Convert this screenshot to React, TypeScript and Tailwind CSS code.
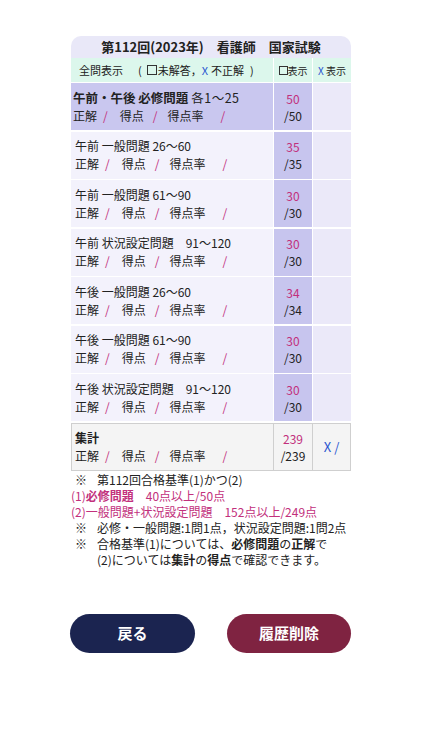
import React from "react";

const rows = [
  { title: "午前・午後 必修問題 各1〜25", bold: true, total: "50", hi: true },
  { title: "午前 一般問題 26〜60", total: "35" },
  { title: "午前 一般問題 61〜90", total: "30" },
  { title: "午前 状況設定問題　91〜120", total: "30" },
  { title: "午後 一般問題 26〜60", total: "34" },
  { title: "午後 一般問題 61〜90", total: "30" },
  { title: "午後 状況設定問題　91〜120", total: "30" },
];

function Box({ size }: { size: string }) {
  return <span className={`inline-block border border-[#333] ${size} align-[-1px]`} />;
}

function Line2() {
  return (
    <div className="leading-[18px] flex items-center">
      <span>正解</span>
      <span className="ml-[6px] text-[#c2307c]">/</span>
      <span className="ml-[12px]">得点</span>
      <span className="ml-[9px] text-[#c2307c]">/</span>
      <span className="ml-[10px]">得点率</span>
      <span className="ml-[17px] text-[#c2307c]">/</span>
    </div>
  );
}

export default function App() {
  return (
    <div className="w-[422px] h-[750px] bg-white text-[#222] font-['Noto_Sans_CJK_JP',sans-serif]">
      <div className="pt-[36px] pl-[71px] w-[351px]">
        <div className="h-[22px] rounded-t-[10px] bg-[#e9e8f8] flex items-center justify-center text-[13px] font-bold">
          第112回(2023年)　看護師　国家試験
        </div>
        <div className="h-[24px] flex bg-[#dcf7ec] text-[11px]">
          <div className="w-[202px] flex items-center pl-[8px]">
            <span>全問表示</span>
            <span className="ml-[15px]">(</span>
            <span className="ml-[5px] flex items-center">
              <Box size="w-[10px] h-[10px]" />
            </span>
            <span className="ml-[1px]">未解答，</span>
            <span className="text-[#2a56d0]">X</span>
            <span className="ml-[3px]">不正解</span>
            <span className="ml-[6px]">)</span>
          </div>
          <div className="w-[39px] border-l border-white flex items-center justify-center text-[10px]">
            <Box size="w-[9px] h-[9px]" />
            <span>表示</span>
          </div>
          <div className="w-[39px] border-l border-white flex items-center justify-center text-[10px]">
            <span className="text-[#2a56d0]">X</span>&nbsp;表示
          </div>
        </div>
        <div className="flex flex-col gap-[1.5px] pt-[1px]">
          {rows.map((r, i) => (
            <div key={i} className="h-[47px] flex text-[12px]">
              <div
                className={`w-[202px] flex flex-col justify-center ${
                  r.hi ? "bg-[#c9c7ef] pl-[2px]" : "bg-[#f3f2fc] pl-[4px]"
                }`}
              >
                <div className={`leading-[18px] ${r.bold ? "font-bold text-[12.5px]" : ""}`}>
                  {r.bold ? (
                    <>
                      午前・午後 必修問題 <span className="font-normal tracking-[0.5px]">各1〜25</span>
                    </>
                  ) : (
                    r.title
                  )}
                </div>
                <Line2 />
              </div>
              <div className="w-[39px] border-l border-white bg-[#c7c5ee] flex flex-col items-center justify-center text-[12px] leading-[17px]">
                <div className="text-[#c2307c]">{r.total}</div>
                <div>/{r.total}</div>
              </div>
              <div className="w-[39px] border-l border-white bg-[#ebe9f9]" />
            </div>
          ))}
          <div className="h-[48px] flex text-[12px] border border-[#cfcfcf] bg-[#f4f4f4]">
            <div className="w-[201px] flex flex-col justify-center pl-[3px]">
              <div className="leading-[18px] font-bold">集計</div>
              <Line2 />
            </div>
            <div className="w-[39px] border-l border-[#cfcfcf] flex flex-col items-center justify-center text-[12px] leading-[17px]">
              <div className="text-[#c2307c]">239</div>
              <div>/239</div>
            </div>
            <div className="w-[38px] border-l border-[#cfcfcf] flex items-center justify-center text-[13px] text-[#2a56d0]">
              X /
            </div>
          </div>
        </div>
        <div className="pt-[1px] text-[12px] leading-[16px]">
          <div className="pl-[4px] flex">
            <span className="w-[22px]">※</span>第112回合格基準(1)かつ(2)
          </div>
          <div className="text-[#c2307c]">
            (1)<span className="font-bold">必修問題</span>　40点以上/50点
          </div>
          <div className="text-[#c2307c]">(2)一般問題+状況設定問題　152点以上/249点</div>
          <div className="pl-[4px] flex">
            <span className="w-[22px]">※</span>必修・一般問題:1問1点，状況設定問題:1問2点
          </div>
          <div className="pl-[4px] flex">
            <span className="w-[22px]">※</span>
            <span>
              合格基準(1)については、<span className="font-bold">必修問題</span>の
              <span className="font-bold">正解</span>で
            </span>
          </div>
          <div className="pl-[26px]">
            (2)については<span className="font-bold">集計</span>の<span className="font-bold">得点</span>で確認できます。
          </div>
        </div>
      </div>
      <div className="mt-[46px] pl-[70px] flex gap-[32px]">
        <button className="w-[125px] h-[39px] rounded-full bg-[#1b2450] text-white font-bold text-[15px]">
          戻る
        </button>
        <button className="w-[124px] h-[39px] rounded-full bg-[#7f2341] text-white font-bold text-[15px]">
          履歴削除
        </button>
      </div>
    </div>
  );
}
